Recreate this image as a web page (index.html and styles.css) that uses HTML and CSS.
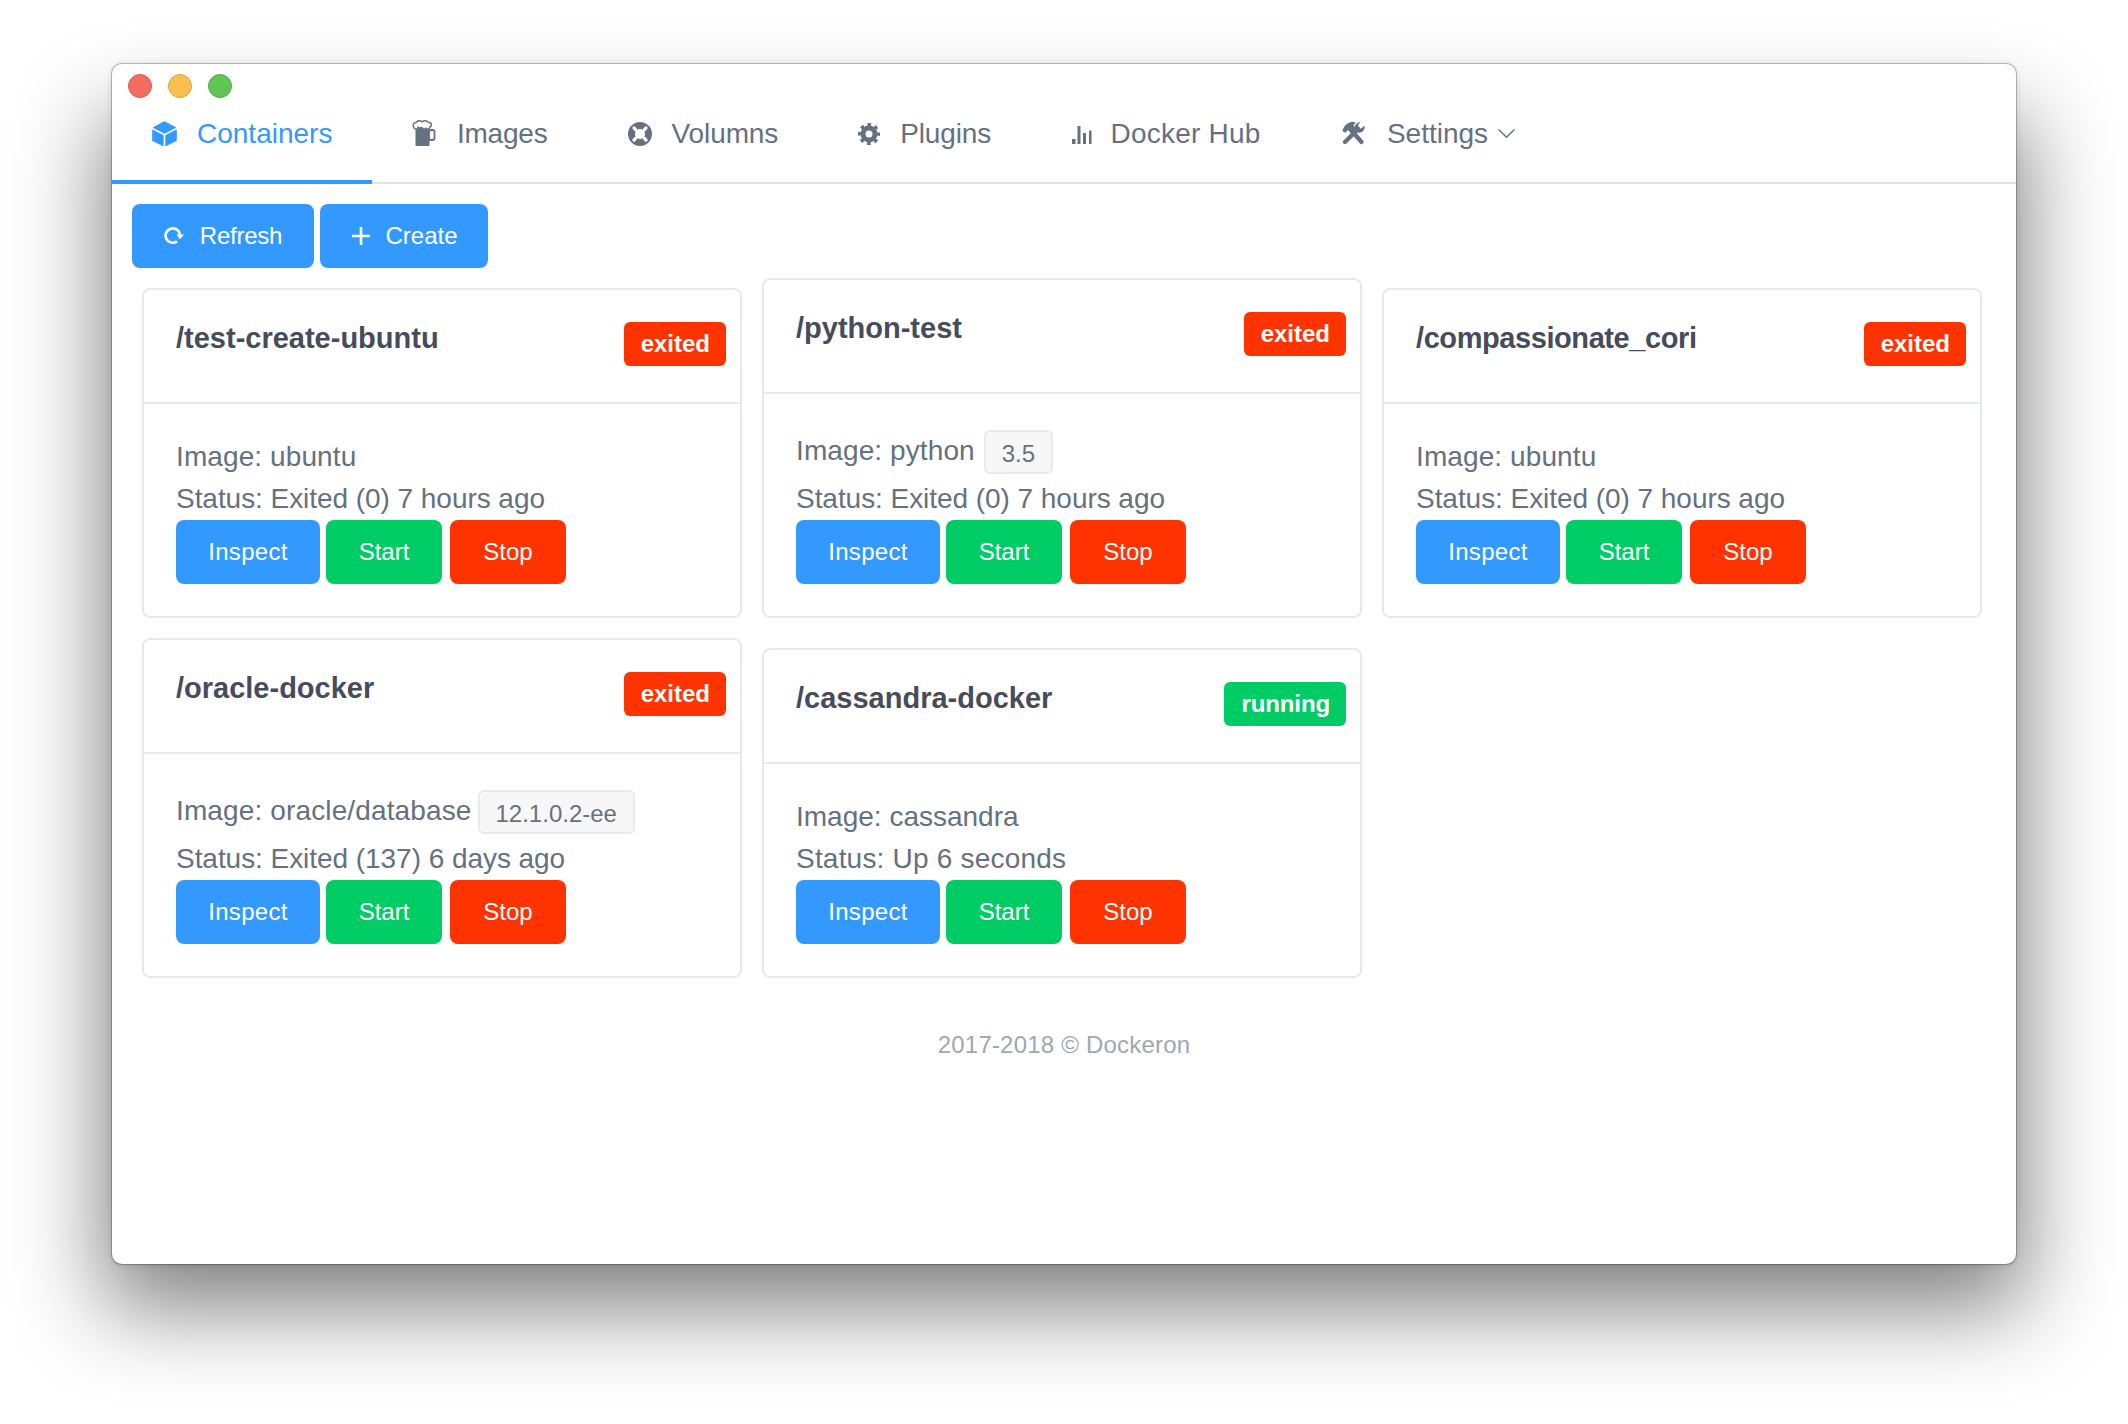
FILE: index.html
```html
<!DOCTYPE html>
<html lang="en">
<head>
<meta charset="utf-8">
<title>Dockeron</title>
<link rel="stylesheet" href="styles.css">
</head>
<body>
<div class="window">
  <div class="titlebar">
    <span class="light light-red"></span>
    <span class="light light-yellow"></span>
    <span class="light light-green"></span>
  </div>
  <nav class="tabs">
    <a class="tab tab-active">
      <svg class="ico ico-cube" viewBox="0 0 25 25"><path d="M12.5 0.7 23.6 6.6 12.5 12.2 1.4 6.6Z" fill="currentColor" stroke="currentColor" stroke-linejoin="round"/><path d="M0.6 9 11.2 14.3V25L0.6 19.6Z" fill="currentColor" stroke="currentColor" stroke-width=".8" stroke-linejoin="round"/><path d="M24.4 9 13.8 14.3V25L24.4 19.6Z" fill="currentColor" stroke="currentColor" stroke-width=".8" stroke-linejoin="round"/></svg>
      Containers
    </a>
    <a class="tab tab-images">
      <svg class="ico ico-beer" viewBox="0 0 24 26"><rect x="3.5" y="7" width="14" height="19" rx="1" fill="currentColor"/><rect x="17" y="10" width="5.5" height="10" rx="2" fill="none" stroke="currentColor" stroke-width="1.8"/><path d="M2.5 8.500C0.300 6 0.800 2.500 4 2.600 5.500 0.400 8.500 0.400 10 1.800 12 0.300 15.500 0.500 16.500 2.500 19.500 2 20.500 5.500 18 7 17.500 9.500 14.500 9.800 14 8 13 10 10.500 9 10 7.500 8.500 8 6.500 8 6 7 5.800 9.500 3.800 10 2.500 8.500Z" fill="#fff" stroke="currentColor" stroke-width="1.500" stroke-linejoin="round"/></svg>
      Images
    </a>
    <a class="tab tab-volumns">
      <svg class="ico ico-buoy" viewBox="0 0 24 24"><circle cx="12" cy="12" r="12" fill="currentColor"/><circle cx="12" cy="12" r="5" fill="#fff"/><path d="M7.800 7.800 6 6M16.200 7.800 18 6M7.800 16.200 6 18M16.200 16.200 18 18" stroke="#fff" stroke-width="3.200" stroke-linecap="round"/></svg>
      Volumns
    </a>
    <a class="tab tab-plugins">
      <svg class="ico ico-gear" viewBox="0 0 22 22"><circle cx="11" cy="11" r="9.500" fill="none" stroke="currentColor" stroke-width="3" stroke-dasharray="3.700 3.760" stroke-dashoffset="1.850"/><circle cx="11" cy="11" r="8.500" fill="currentColor"/><circle cx="11" cy="11" r="3.500" fill="#fff"/></svg>
      Plugins
    </a>
    <a class="tab tab-hub">
      <svg class="ico ico-bars" viewBox="0 0 20 18"><rect x="0" y="13" width="3.500" height="5" fill="currentColor"/><rect x="5.500" y="0" width="3" height="18" fill="currentColor"/><rect x="11" y="7" width="3" height="11" fill="currentColor"/><rect x="17" y="4.500" width="2.500" height="13.500" fill="currentColor"/></svg>
      Docker Hub
    </a>
    <a class="tab">
      <svg class="ico ico-tools" viewBox="0 0 23 24"><path d="M19.500 21 9 9" stroke="currentColor" stroke-width="4.200" stroke-linecap="round"/><path d="M0.300 10C1.500 5.500 5.500 1 11 0.800L13.800 1.500 11.500 4 13.500 7.500 9 12 6 9 3.500 11.800Z" fill="currentColor"/><path d="M3 21 15 9" stroke="currentColor" stroke-width="4.200" stroke-linecap="round"/><path d="M13.500 10.500C11.300 6.500 13.500 1.500 18.500 1L15.800 4.300 18.700 7.700 22.500 4.800C23.500 9 19.500 13 15.500 11.500Z" fill="currentColor"/></svg>
      Settings
      <svg class="chevron" viewBox="0 0 17 9"><path d="M0.600 0.600 8.500 8.300 16.400 0.600" fill="none" stroke="currentColor" stroke-width="1.400"/></svg>
    </a>
  </nav>
  <main class="content">
    <div class="toolbar">
      <button class="btn btn-blue btn-refresh">
        <svg class="btn-ico ico-refresh" viewBox="0 0 20 18"><path d="M15.900 8.500A7.200 7.200 0 1 0 13 15.400" fill="none" stroke="currentColor" stroke-width="2.600"/><path d="M12.500 8.500H20L16 13.200Z" fill="currentColor"/></svg>
        <span class="refresh-label">Refresh</span>
      </button>
      <button class="btn btn-blue btn-create">
        <svg class="btn-ico ico-plus" viewBox="0 0 18 18"><path d="M9 0V18M0 9H18" stroke="currentColor" stroke-width="2.600"/></svg>
        Create
      </button>
    </div>
    <div class="cards">
      <article class="card">
        <header class="card-head"><p class="card-title">/test-create-ubuntu</p><span class="badge badge-red">exited</span></header>
        <div class="card-body">
          <div class="line fit-wide1">Image: ubuntu</div>
          <div class="line fit-tight">Status: Exited (0) 7 hours ago</div>
          <div class="actions"><button class="btn btn-blue btn-inspect">Inspect</button><button class="btn btn-green btn-start">Start</button><button class="btn btn-red btn-stop">Stop</button></div>
        </div>
      </article>
      <article class="card">
        <header class="card-head"><p class="card-title">/python-test</p><span class="badge badge-red">exited</span></header>
        <div class="card-body">
          <div class="line line-tagged fit-wide1">Image: python<span class="tag">3.5</span></div>
          <div class="line fit-tight">Status: Exited (0) 7 hours ago</div>
          <div class="actions"><button class="btn btn-blue btn-inspect">Inspect</button><button class="btn btn-green btn-start">Start</button><button class="btn btn-red btn-stop">Stop</button></div>
        </div>
      </article>
      <article class="card">
        <header class="card-head"><p class="card-title title-tight">/compassionate_cori</p><span class="badge badge-red">exited</span></header>
        <div class="card-body">
          <div class="line fit-wide1">Image: ubuntu</div>
          <div class="line fit-tight">Status: Exited (0) 7 hours ago</div>
          <div class="actions"><button class="btn btn-blue btn-inspect">Inspect</button><button class="btn btn-green btn-start">Start</button><button class="btn btn-red btn-stop">Stop</button></div>
        </div>
      </article>
      <article class="card">
        <header class="card-head"><p class="card-title">/oracle-docker</p><span class="badge badge-red">exited</span></header>
        <div class="card-body">
          <div class="line line-tagged fit-wide2">Image: oracle/database<span class="tag tag-close">12.1.0.2-ee</span></div>
          <div class="line fit-tight">Status: Exited (137) 6 days ago</div>
          <div class="actions"><button class="btn btn-blue btn-inspect">Inspect</button><button class="btn btn-green btn-start">Start</button><button class="btn btn-red btn-stop">Stop</button></div>
        </div>
      </article>
      <article class="card">
        <header class="card-head"><p class="card-title">/cassandra-docker</p><span class="badge badge-green">running</span></header>
        <div class="card-body">
          <div class="line">Image: cassandra</div>
          <div class="line fit-wide3">Status: Up 6 seconds</div>
          <div class="actions"><button class="btn btn-blue btn-inspect">Inspect</button><button class="btn btn-green btn-start">Start</button><button class="btn btn-red btn-stop">Stop</button></div>
        </div>
      </article>
    </div>
    <footer class="footer">2017-2018 © Dockeron</footer>
  </main>
</div>
</body>
</html>
```
FILE: styles.css
```css
* { box-sizing: border-box; }
html { height: 1424px; background: #fff; overflow: hidden; }
body {
  margin: 0;
  height: 1424px;
  padding: 64px 112px 160px;
  font-family: "Liberation Sans", Arial, sans-serif;
  font-size: 28px;
  color: #657180;
}
.window {
  position: relative;
  width: 1904px;
  height: 1200px;
  background: #fff;
  border-radius: 10px;
  box-shadow: 0 0 0 1px rgba(0, 0, 0, .22), 0 1px 6px rgba(0, 0, 0, .15);
}
.window::before {
  content: "";
  position: absolute;
  top: 54px;
  right: -8px;
  bottom: -44px;
  left: -8px;
  z-index: -1;
  background: rgba(0, 0, 0, .5);
  filter: blur(45px);
}
.titlebar { display: flex; gap: 16px; height: 40px; padding: 10px 0 0 16px; }
.light { width: 24px; height: 24px; border-radius: 50%; border: 1px solid; }
.light-red { background: #f36c60; border-color: #dc5a50; }
.light-yellow { background: #f8c14f; border-color: #dfa63e; }
.light-green { background: #61c554; border-color: #50ab44; }
.tabs { display: flex; height: 80px; border-bottom: 2px solid #dde3eb; }
.tab {
  display: flex;
  align-items: flex-start;
  height: 80px;
  padding: 9px 40px 0;
  line-height: 42px;
  border-bottom: 4px solid transparent;
  color: #657180;
  white-space: nowrap;
}
.tab-active { color: #3399ff; border-bottom-color: #3399ff; }
.tab-images { letter-spacing: -.2px; }
.tab-volumns { letter-spacing: -.1px; }
.tab-plugins { letter-spacing: -.14px; }
.tab-hub { letter-spacing: .2px; }
.ico { display: block; flex: none; margin-top: 8px; fill: none; }
.ico-cube { width: 25px; height: 25px; margin-right: 20px; }
.ico-beer { width: 24px; height: 26px; margin-top: 7px; margin-right: 20.5px; }
.ico-buoy { width: 24px; height: 24px; margin-top: 9px; margin-right: 20px; }
.ico-gear { width: 22px; height: 22px; margin-top: 10px; margin-right: 20px; }
.ico-bars { width: 20px; height: 18px; margin-top: 13px; margin-right: 18.5px; margin-left: 1px; }
.ico-tools { width: 23px; height: 24px; margin-top: 8px; margin-left: 2px; margin-right: 21.5px; }
.chevron { width: 17px; height: 9px; margin: 16px 0 0 10px; }
.content { padding: 20px 34px 0 20px; }
.toolbar { display: flex; gap: 6px; }
.btn {
  display: flex;
  align-items: center;
  justify-content: center;
  height: 64px;
  padding: 0;
  border: 0;
  border-radius: 8px;
  font: 24px "Liberation Sans", Arial, sans-serif;
  color: #fff;
}
.btn-blue { background: #3399ff; }
.btn-green { background: #00cc66; }
.btn-red { background: #ff3300; }
.btn-refresh { width: 182px; }
.btn-create { width: 168px; }
.refresh-label { letter-spacing: -.25px; }
.btn-ico { display: block; flex: none; }
.ico-refresh { width: 20px; height: 18px; margin-right: 16px; margin-bottom: 2px; }
.ico-plus { width: 18px; height: 18px; margin-left: 2px; margin-right: 15px; }
.cards {
  display: grid;
  grid-template-columns: repeat(3, 600px);
  gap: 20px;
  align-items: end;
  margin: 10px 0 0 10px;
}
.card { position: relative; border: 2px solid #e6eaf0; border-radius: 8px; background: #fff; }
.card-head { height: 114px; padding: 28px 32px 0; border-bottom: 2px solid #e6eaf0; }
.card-title { margin: 0; font-size: 29px; line-height: 40px; font-weight: 700; color: #464c5b; }
.title-tight { letter-spacing: -.42px; }
.badge {
  position: absolute;
  top: 32px;
  right: 14px;
  height: 44px;
  padding: 0 16px 0 17px;
  border-radius: 6px;
  font-size: 24px;
  font-weight: 700;
  line-height: 43px;
  color: #fff;
}
.badge-red { background: #ff3300; }
.badge-green { background: #00cc66; letter-spacing: -.1px; }
.card-body { padding: 32px; }
.line { display: flex; align-items: center; min-height: 42px; line-height: 42px; white-space: nowrap; }
.line-tagged { padding-bottom: 2px; }
.fit-tight { letter-spacing: -.05px; }
.fit-wide1 { letter-spacing: .1px; }
.fit-wide2 { letter-spacing: .13px; }
.fit-wide3 { letter-spacing: .2px; }
.tag {
  align-self: flex-start;
  height: 44px;
  margin: 4px 0 2px 9px;
  padding: 3px 16px 0;
  border: 2px solid #e9eaec;
  border-radius: 6px;
  background: #f7f7f7;
  font-size: 24px;
  line-height: 37px;
  letter-spacing: 0;
}
.tag-close { margin-left: 6px; }
.actions { display: flex; }
.btn-inspect { width: 144px; margin-right: 6px; letter-spacing: .3px; }
.btn-start { width: 116px; margin-right: 8px; }
.btn-stop { width: 116px; }
.footer { margin-top: 49px; margin-left: 14px; text-align: center; font-size: 24px; line-height: 36px; letter-spacing: .2px; color: #9ea7b4; }
```
